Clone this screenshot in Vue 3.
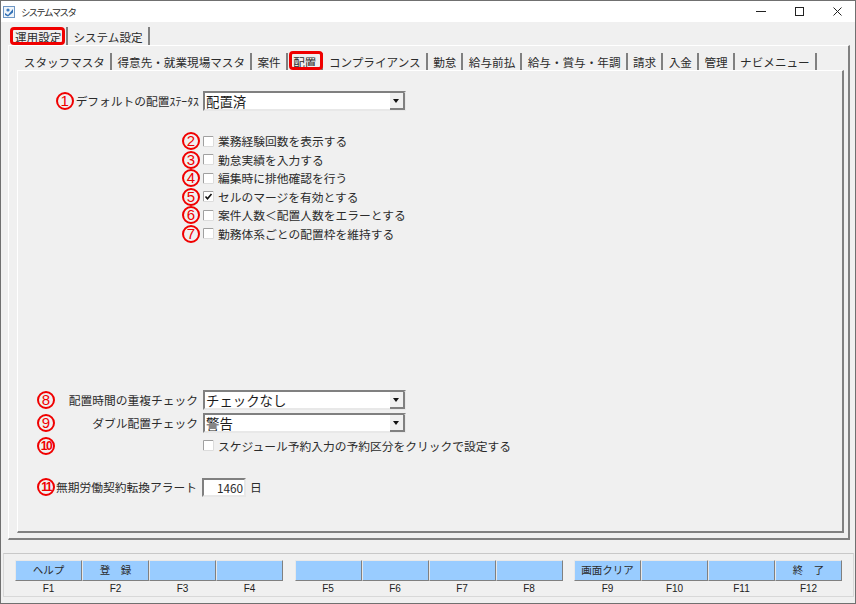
<script setup>
const outerTabs = [
  { name: '運用設定', marked: true },
  { name: 'システム設定' },
]

const innerTabs = [
  { name: 'スタッフマスタ' },
  { name: '得意先・就業現場マスタ' },
  { name: '案件' },
  { name: '配置', marked: true },
  { name: 'コンプライアンス' },
  { name: '勤怠' },
  { name: '給与前払' },
  { name: '給与・賞与・年調' },
  { name: '請求' },
  { name: '入金' },
  { name: '管理' },
  { name: 'ナビメニュー' },
]

const options = [
  { no: 2, text: '業務経験回数を表示する' },
  { no: 3, text: '勤怠実績を入力する' },
  { no: 4, text: '編集時に排他確認を行う' },
  { no: 5, text: 'セルのマージを有効とする', checked: true },
  { no: 6, text: '案件人数＜配置人数をエラーとする' },
  { no: 7, text: '勤務体系ごとの配置枠を維持する' },
]

const keyGroups = [
  [{ key: 'F1', label: 'ヘルプ' }, { key: 'F2', label: '登　録' }, { key: 'F3' }, { key: 'F4' }],
  [{ key: 'F5' }, { key: 'F6' }, { key: 'F7' }, { key: 'F8' }],
  [{ key: 'F9', label: '画面クリア' }, { key: 'F10' }, { key: 'F11' }, { key: 'F12', label: '終　了' }],
]
</script>

<template>
  <div class="window">
    <header class="titlebar">
      <svg class="app-icon" width="12" height="12" viewBox="0 0 12 12">
        <rect x="0.5" y="0.5" width="11" height="11" fill="#eef4fa" stroke="#6f97c4" />
        <path d="M2 7 L5 9 L10 3 L10 6.5 L5 10.5 L2 9 Z" fill="#2f6fb5" />
        <circle cx="5" cy="4" r="1.6" fill="#3d7cc0" />
      </svg>
      <span class="title">システムマスタ</span>
      <div class="controls">
        <svg width="10" height="9" viewBox="0 0 10 9"><path d="M0 4.5H10" stroke="#222" /></svg>
        <svg width="9" height="9" viewBox="0 0 9 9"><rect x="0.5" y="0.5" width="8" height="8" fill="none" stroke="#222" /></svg>
        <svg width="9" height="9" viewBox="0 0 9 9"><path d="M0.5 0.5L8.5 8.5M8.5 0.5L0.5 8.5" stroke="#222" /></svg>
      </div>
    </header>

    <div class="main">
      <nav class="outer-tabs">
        <div v-for="tab in outerTabs" :key="tab.name" class="outer-tab" :class="{ marked: tab.marked }">{{ tab.name }}</div>
      </nav>
      <section class="outer-panel">
        <nav class="inner-tabs">
          <div v-for="tab in innerTabs" :key="tab.name" class="inner-tab" :class="{ marked: tab.marked }">{{ tab.name }}</div>
        </nav>
        <div class="inner-panel">
          <div class="row first">
            <div class="cell end">
              <span class="mark">1</span>
              <span>デフォルトの配置ｽﾃｰﾀｽ</span>
            </div>
            <div class="combo"><span>配置済</span><i class="arrow"></i></div>
          </div>

          <div class="checks">
            <div v-for="opt in options" :key="opt.no" class="row check-row">
              <div class="cell end"><span class="mark">{{ opt.no }}</span></div>
              <label class="check">
                <svg width="11" height="11" viewBox="0 0 11 11">
                  <rect x="0" y="0" width="11" height="11" fill="#fff" />
                  <path d="M0.5 11V0.5H11" fill="none" stroke="#a0a0a0" />
                  <path d="M10.5 0V10.5H0" fill="none" stroke="#dcdcdc" />
                  <path v-if="opt.checked" d="M2.5 5.5L4.5 7.8L8.5 3" fill="none" stroke="#111" stroke-width="1.6" />
                </svg>
                <span>{{ opt.text }}</span>
              </label>
            </div>
          </div>

          <div class="row lower">
            <div class="cell between">
              <span class="mark">8</span>
              <span>配置時間の重複チェック</span>
            </div>
            <div class="combo"><span>チェックなし</span><i class="arrow"></i></div>
          </div>
          <div class="row second">
            <div class="cell between">
              <span class="mark">9</span>
              <span>ダブル配置チェック</span>
            </div>
            <div class="combo"><span>警告</span><i class="arrow"></i></div>
          </div>
          <div class="row third">
            <div class="cell between">
              <span class="mark small">10</span>
            </div>
            <label class="check">
              <svg width="11" height="11" viewBox="0 0 11 11">
                <rect x="0" y="0" width="11" height="11" fill="#fff" />
                <path d="M0.5 11V0.5H11" fill="none" stroke="#a0a0a0" />
                <path d="M10.5 0V10.5H0" fill="none" stroke="#dcdcdc" />
              </svg>
              <span>スケジュール予約入力の予約区分をクリックで設定する</span>
            </label>
          </div>
          <div class="row last">
            <div class="cell between narrow">
              <span class="mark small">11</span>
              <span>無期労働契約転換アラート</span>
            </div>
            <div class="days"><span class="days-box">1460</span><span>日</span></div>
          </div>
        </div>
      </section>

      <footer class="keybar">
        <div v-for="(group, i) in keyGroups" :key="i" class="key-group">
          <div v-for="item in group" :key="item.key" class="key">
            <div class="key-btn">{{ item.label }}</div>
            <div class="key-name">{{ item.key }}</div>
          </div>
        </div>
      </footer>
    </div>
  </div>
</template>

<style>
html, body {
  margin: 0;
  background: #f0f0f0;
}
</style>

<style scoped>
.window {
  box-sizing: border-box;
  width: 856px;
  height: 604px;
  border: 1px solid #707070;
  background: #f0f0f0;
  color: #2b2b2b;
  font: 11.6px/16px "Noto Sans CJK JP", "Liberation Sans", sans-serif;
  overflow: hidden;
  display: flex;
  flex-direction: column;
}

.titlebar {
  height: 21px;
  flex: none;
  background: #fff;
  display: flex;
  align-items: center;
  padding-left: 2px;
}

.app-icon {
  margin-right: 6px;
}

.title {
  font-size: 9.5px;
  letter-spacing: -0.8px;
  font-feature-settings: "palt";
}

.controls {
  margin-left: auto;
  display: flex;
  gap: 29px;
  padding-right: 13px;
}

.main {
  flex: 1;
  display: flex;
  flex-direction: column;
  padding: 5px 2px 6px 7px;
}

.outer-tabs {
  display: flex;
  height: 18px;
  padding-left: 2px;
}

.outer-tab {
  padding: 2px 5px 0;
  border-right: 2px solid #808080;
  position: relative;
}

.outer-tab.marked::after {
  content: "";
  position: absolute;
  left: 0;
  right: 1px;
  top: 0;
  bottom: 0;
  border: 3px solid #f00000;
  border-radius: 4px;
}

.outer-panel {
  box-sizing: border-box;
  width: 842px;
  height: 495px;
  border-top: 1px solid #fff;
  border-left: 1px solid #fff;
  border-right: 2px solid #808080;
  border-bottom: 2px solid #808080;
  padding: 7px 4px 5px 8px;
  display: flex;
  flex-direction: column;
}

.inner-tabs {
  display: flex;
  height: 17px;
  padding-left: 1.3px;
}

.inner-tab {
  padding: 1px 5px 0 5.5px;
  border-right: 2px solid #808080;
  position: relative;
}

.inner-tab.marked::after {
  content: "";
  position: absolute;
  left: 1px;
  right: -2px;
  top: -2px;
  bottom: 0;
  border: 3px solid #f00000;
  border-radius: 4px;
}

.inner-panel {
  flex: 1;
  border-top: 1px solid #fff;
  border-left: 1px solid #fff;
  border-right: 2px solid #808080;
  border-bottom: 2px solid #808080;
  font-size: 11.75px;
}

.row {
  display: flex;
  align-items: center;
}

.cell {
  box-sizing: border-box;
  width: 166px;
  margin-left: 19px;
  flex: none;
  display: flex;
  align-items: center;
}

.end {
  justify-content: flex-end;
}

.between {
  justify-content: space-between;
}

.narrow {
  width: 160px;
}

.mark {
  box-sizing: border-box;
  width: 18px;
  height: 18px;
  flex: none;
  border: 2px solid #f00000;
  border-radius: 50%;
  color: #f00000;
  font: 15px/14px "Liberation Sans", sans-serif;
  text-align: center;
}

.mark.small {
  font-size: 12px;
  font-weight: bold;
  letter-spacing: -1.5px;
}

.first .mark {
  margin-right: 2px;
}

.check-row .mark {
  margin-right: 3px;
}

.first {
  margin-top: 20px;
}

.first .cell {
  padding-right: 4px;
}

.lower .cell,
.second .cell {
  padding-right: 5px;
}

.combo {
  box-sizing: border-box;
  width: 203px;
  height: 20px;
  background: #fff;
  border: 2px solid;
  border-color: #808080 #e8e8e8 #e8e8e8 #808080;
  color: #1c1c1c;
  font-size: 13.4px;
  line-height: 17px;
  padding-left: 1px;
  position: relative;
}

.arrow {
  position: absolute;
  right: -1px;
  top: 0;
  width: 13px;
  height: 15px;
  background: #f0f0f0;
  border-right: 2px solid #808080;
  border-bottom: 2px solid #808080;
}

.arrow::after {
  content: "";
  position: absolute;
  left: 3px;
  top: 6px;
  border: 3.5px solid transparent;
  border-top: 4px solid #111;
  border-bottom: 0;
}

.checks {
  margin-top: 21px;
  display: flex;
  flex-direction: column;
  gap: 0.6px;
}

.check-row {
  height: 18px;
}

.check {
  display: flex;
  align-items: center;
  gap: 4px;
}

.lower {
  margin-top: 147px;
}

.second {
  margin-top: 3px;
}

.third {
  margin-top: 4px;
}

.last {
  margin-top: 23px;
}

.days {
  display: flex;
  align-items: center;
  gap: 4px;
  margin-left: 5px;
}

.days-box {
  box-sizing: border-box;
  width: 44px;
  height: 19px;
  background: #fff;
  border: 2px solid;
  border-color: #808080 #e8e8e8 #e8e8e8 #808080;
  text-align: right;
  padding-right: 1px;
  line-height: 15px;
}

.keybar {
  box-sizing: border-box;
  width: 851px;
  margin: 13px 0 0 -5px;
  height: 44px;
  border: 1px solid #d8d8d8;
  border-top-color: #c8c8c8;
  padding: 6px 11px 0;
  display: flex;
  justify-content: space-between;
}

.key-group {
  display: flex;
}

.key {
  width: 67px;
}

.key-btn {
  box-sizing: border-box;
  height: 21px;
  background: #99ccff;
  border: 1px solid;
  border-color: #e8e8e8 #808080 #808080 #e8e8e8;
  text-align: center;
  font-size: 10.5px;
  line-height: 18px;
  white-space: pre;
}

.key-name {
  text-align: center;
  font: 10px/13px "Liberation Sans", sans-serif;
  color: #222;
  margin-top: 1px;
}
</style>
